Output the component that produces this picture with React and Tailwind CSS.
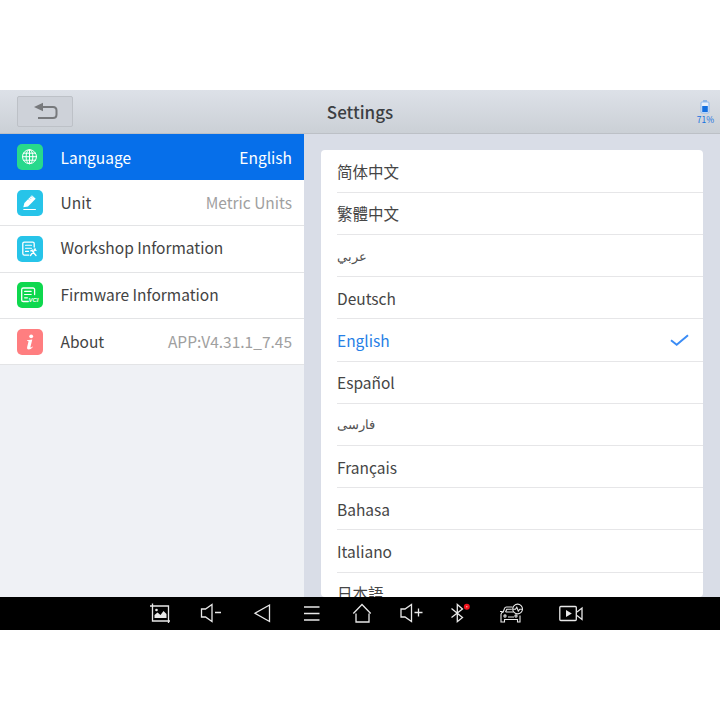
import React from "react";

const settings = [
  { label: "Language", value: "English", icon: "globe", color: "bg-[#28d98c]", active: true },
  { label: "Unit", value: "Metric Units", icon: "unit", color: "bg-[#27c4e9]" },
  { label: "Workshop Information", icon: "workshop", color: "bg-[#27c4e9]" },
  { label: "Firmware Information", icon: "firmware", color: "bg-[#0ed84e]" },
  { label: "About", value: "APP:V4.31.1_7.45", icon: "info", color: "bg-[#ff7e80]" },
];

const languages = [
  { name: "简体中文" },
  { name: "繁體中文" },
  { name: "عربي", rtl: true },
  { name: "Deutsch" },
  { name: "English" },
  { name: "Español" },
  { name: "فارسی", rtl: true },
  { name: "Français" },
  { name: "Bahasa" },
  { name: "Italiano" },
  { name: "日本語" },
];

function SettingIcon({ name }) {
  return (
    <svg width="26" height="26" viewBox="0 0 26 26" fill="none" stroke="white" strokeLinecap="round" strokeLinejoin="round">
      {name === "globe" && (
        <g strokeWidth="1">
          <circle cx="12.5" cy="12.7" r="7" />
          <ellipse cx="12.5" cy="12.7" rx="3.4" ry="7" />
          <path d="M12.5 5.7v14M5.5 12.700h14M6.500 9.200h12M6.500 16.200h12" />
        </g>
      )}
      {name === "unit" && (
        <>
          <path d="M6.3 17.300 7.400 12.900 14.900 5.300 18.700 8.700 11 16.400Z" fill="white" stroke="none" />
          <path d="M11.500 9.200l1 1M13 7.700l1 1M14.500 6.200l1 1" stroke="#27c4e9" strokeWidth="0.5" />
          <path d="M6.800 19.500h11.600" strokeWidth="1.200" />
        </>
      )}
      {name === "workshop" && (
        <g strokeWidth="1.3">
          <path d="M17.2 11V7.600a1.500 1.500 0 0 0-1.500-1.500H7.300a1.500 1.500 0 0 0-1.500 1.500v10a1.500 1.500 0 0 0 1.500 1.500h4.500" />
          <path d="M8.500 9.200h6M8.500 12.200h6M8.500 15.400h3" strokeWidth="1.100" />
          <path d="M13.500 19.500l4.800-6.500M14.800 14.500l4.200 5M13.800 14.900l1.600-.9M17.200 13.300l1.800 1.200" />
        </g>
      )}
      {name === "firmware" && (
        <>
          <g strokeWidth="1.300">
            <path d="M17.600 12.500V7.600a1.600 1.600 0 0 0-1.600-1.600H6.300a1.600 1.600 0 0 0-1.600 1.600v10.300a1.600 1.600 0 0 0 1.600 1.600h5" />
            <path d="M7.600 9.300h6.600M7.600 12.500h6.600M7.600 15.800h2.800" strokeWidth="1.200" />
          </g>
          <text x="11.4" y="20" fill="white" stroke="none" fontSize="6" fontWeight="700" fontStyle="italic" fontFamily="Liberation Sans">VCI</text>
        </>
      )}
      {name === "info" && (
        <g fill="white" stroke="none">
          <circle cx="14.2" cy="7.3" r="1.9" />
          <path d="M10.200 11.200 15.300 10.600 13.500 17.800q-.2 1 .6.6l1.500-1 .3.7q-2.200 2.600-4.300 2.500-2-.1-1.500-2.400l1.400-5.800q.1-.5-.5-.5h-1Z" />
        </g>
      )}
    </svg>
  );
}

function SettingRow({ item }) {
  return (
    <div
      className={
        item.active
          ? "flex h-[46px] items-center bg-[#066fea] pl-[17px] pr-3 text-[15.5px] text-white"
          : "flex h-[46.3px] items-center border-b border-[#e3e4e6] bg-white pl-[17px] pr-3 text-[15.5px] text-[#434343]"
      }
    >
      <div className={`size-[26px] shrink-0 rounded-[5px] ${item.color}`}>
        <SettingIcon name={item.icon} />
      </div>
      {/* rows without a value sit a touch higher */}
      <span className={item.value ? "ml-[17.5px] pb-px leading-6" : "ml-[17.5px] pb-[3px] leading-6"}>
        {item.label}
      </span>
      {item.value && (
        <span className={item.active ? "ml-auto pb-px leading-6" : "ml-auto pb-[2px] leading-6 text-[#a0a0a0]"}>
          {item.value}
        </span>
      )}
    </div>
  );
}

function LanguageRow({ lang }) {
  const selected = lang.name === "English";
  return (
    <div className="flex h-[42.2px] shrink-0 items-center border-b border-[#e6e6e8]">
      <span
        dir={lang.rtl ? "rtl" : "ltr"}
        className={
          selected
            ? "text-[15.5px] leading-6 text-[#2680e6]"
            : lang.rtl
              ? "text-[13px] leading-6 text-[#505050]"
              : "text-[15.5px] leading-6 text-[#454545]"
        }
      >
        {lang.name}
      </span>
      {selected && (
        <svg className="ml-auto mr-[14px]" width="19" height="13" viewBox="0 0 19 13" fill="none" stroke="#3b8cf5" strokeWidth="2">
          <path d="M1 6.200 6.700 10.700 18 1.200" />
        </svg>
      )}
    </div>
  );
}

function NavBar() {
  return (
    <div className="h-[33.5px] shrink-0 bg-black">
      <svg width="720" height="33" viewBox="0 0 720 33" fill="none" stroke="#e8e8e8" strokeWidth="1.3">
        {/* screenshot */}
        <path d="M152.500 6.500V24H170M150 9H168.500V26" />
        <path d="M154.500 21v-3l3-2.500 3 2.500 3-4 3 3v4Z" fill="#e8e8e8" stroke="none" />
        <circle cx="156.500" cy="13" r="1.300" fill="#e8e8e8" stroke="none" />
        {/* volume down */}
        <path d="M201.500 12h4l6.500-4.500v17l-6.500-4.500h-4ZM215 15.500h6" />
        {/* back */}
        <path d="M269.500 8v16.500L255 16.200Z" />
        {/* menu */}
        <path d="M304 10h15.500M304 16.500h15.500M304 23h15.500" />
        {/* home */}
        <path d="M353.300 16.500 362 7.500l8.700 9M356 16.500v8.500h13v-8.500" />
        {/* volume up */}
        <path d="M401 12h4l6.500-4.500v17l-6.500-4.500h-4ZM414.500 15.500h8M418.500 11.500v8" />
        {/* bluetooth */}
        <path d="M451.500 11.500 462.500 20.500 457.300 24.700V7.500L462.500 12 451.500 20.500" />
        <circle cx="466.800" cy="9.700" r="3" fill="#f0141e" stroke="none" />
        <circle cx="466.800" cy="9.700" r="0.800" fill="#ffb0a0" stroke="none" />
        {/* vehicle */}
        <g strokeWidth="1.100">
          <path d="M512.500 10h-6q-1.500 0-2 1.500l-1.300 3.500q-2.200.5-2.200 2.500v7.500h3.500v-2.500h13V25h2.500v-6.500M500 14.500h2.500M505.500 15l1.300-2.800h5M505.500 15h8M508 20h6" />
          <circle cx="505" cy="19" r="1.100" />
          <circle cx="516" cy="19" r="1.100" />
          <circle cx="517.600" cy="12" r="4.900" />
          <path d="M513 12.200h2.500l1.300-2 1.500 4 1.500-2h2.800" />
        </g>
        {/* video */}
        <rect x="559.800" y="9.500" width="16.500" height="14" rx="1" />
        <path d="M577 15 582 11V22.500L577 18.500" />
        <path d="M566 13v7l5.800-3.500Z" fill="#e8e8e8" stroke="none" />
      </svg>
    </div>
  );
}

export default function App() {
  return (
    <div className="h-[720px] w-[720px] overflow-hidden bg-white pt-[90px] font-['Noto_Sans_CJK_SC','Noto_Sans',sans-serif]">
      <div className="flex h-[540px] flex-col">
        <header className="grid h-11 shrink-0 grid-cols-[1fr_auto_1fr] items-center border-b border-[#bcc0c6] bg-linear-to-b from-[#dde1e8] to-[#cbd0d6]">
          <div className="pb-px pl-[17px]">
            <button className="flex h-[31px] w-14 items-center justify-center rounded-[2px] border border-[#bdc1c7] bg-[#ced2d9] pl-0.5">
              <svg width="24" height="18" viewBox="0 0 24 18" fill="none" stroke="#77797c" strokeWidth="2">
                <path d="M8 5h11q3.500 0 3.500 3.500v4q0 3.500-3.500 3.500H4" />
                <path d="M0 5 9 .7v8.600Z" fill="#77797c" stroke="none" />
              </svg>
            </button>
          </div>
          <h1 className="text-[17px] font-medium leading-6 text-[#3c3f43]">Settings</h1>
          <div className="flex justify-end pr-1.5">
            <div className="flex flex-col items-center text-[#1470e0]">
              <svg width="10" height="14" viewBox="0 0 10 14">
                <path d="M3 1h4" stroke="#4a91e6" />
                <rect x="1" y="2" width="8" height="11" rx="1" fill="#e8f0fa" stroke="#8fb9ec" />
                <rect x="2.200" y="6" width="5.600" height="6" fill="#1470e0" />
              </svg>
              <span className="text-[8.5px] leading-[10px]">71%</span>
            </div>
          </div>
        </header>

        <main className="flex min-h-0 flex-1">
          <nav className="w-[304px] shrink-0 bg-[#eff1f5]">
            {settings.map((item) => (
              <SettingRow key={item.label} item={item} />
            ))}
          </nav>
          <section className="flex flex-1 bg-[#d9dde7] px-[17px] pt-4">
            <div className="flex flex-1 flex-col overflow-hidden rounded-[4px] bg-white pl-4 pt-[0.7px]">
              {languages.map((lang) => (
                <LanguageRow key={lang.name} lang={lang} />
              ))}
            </div>
          </section>
        </main>

        <NavBar />
      </div>
    </div>
  );
}
